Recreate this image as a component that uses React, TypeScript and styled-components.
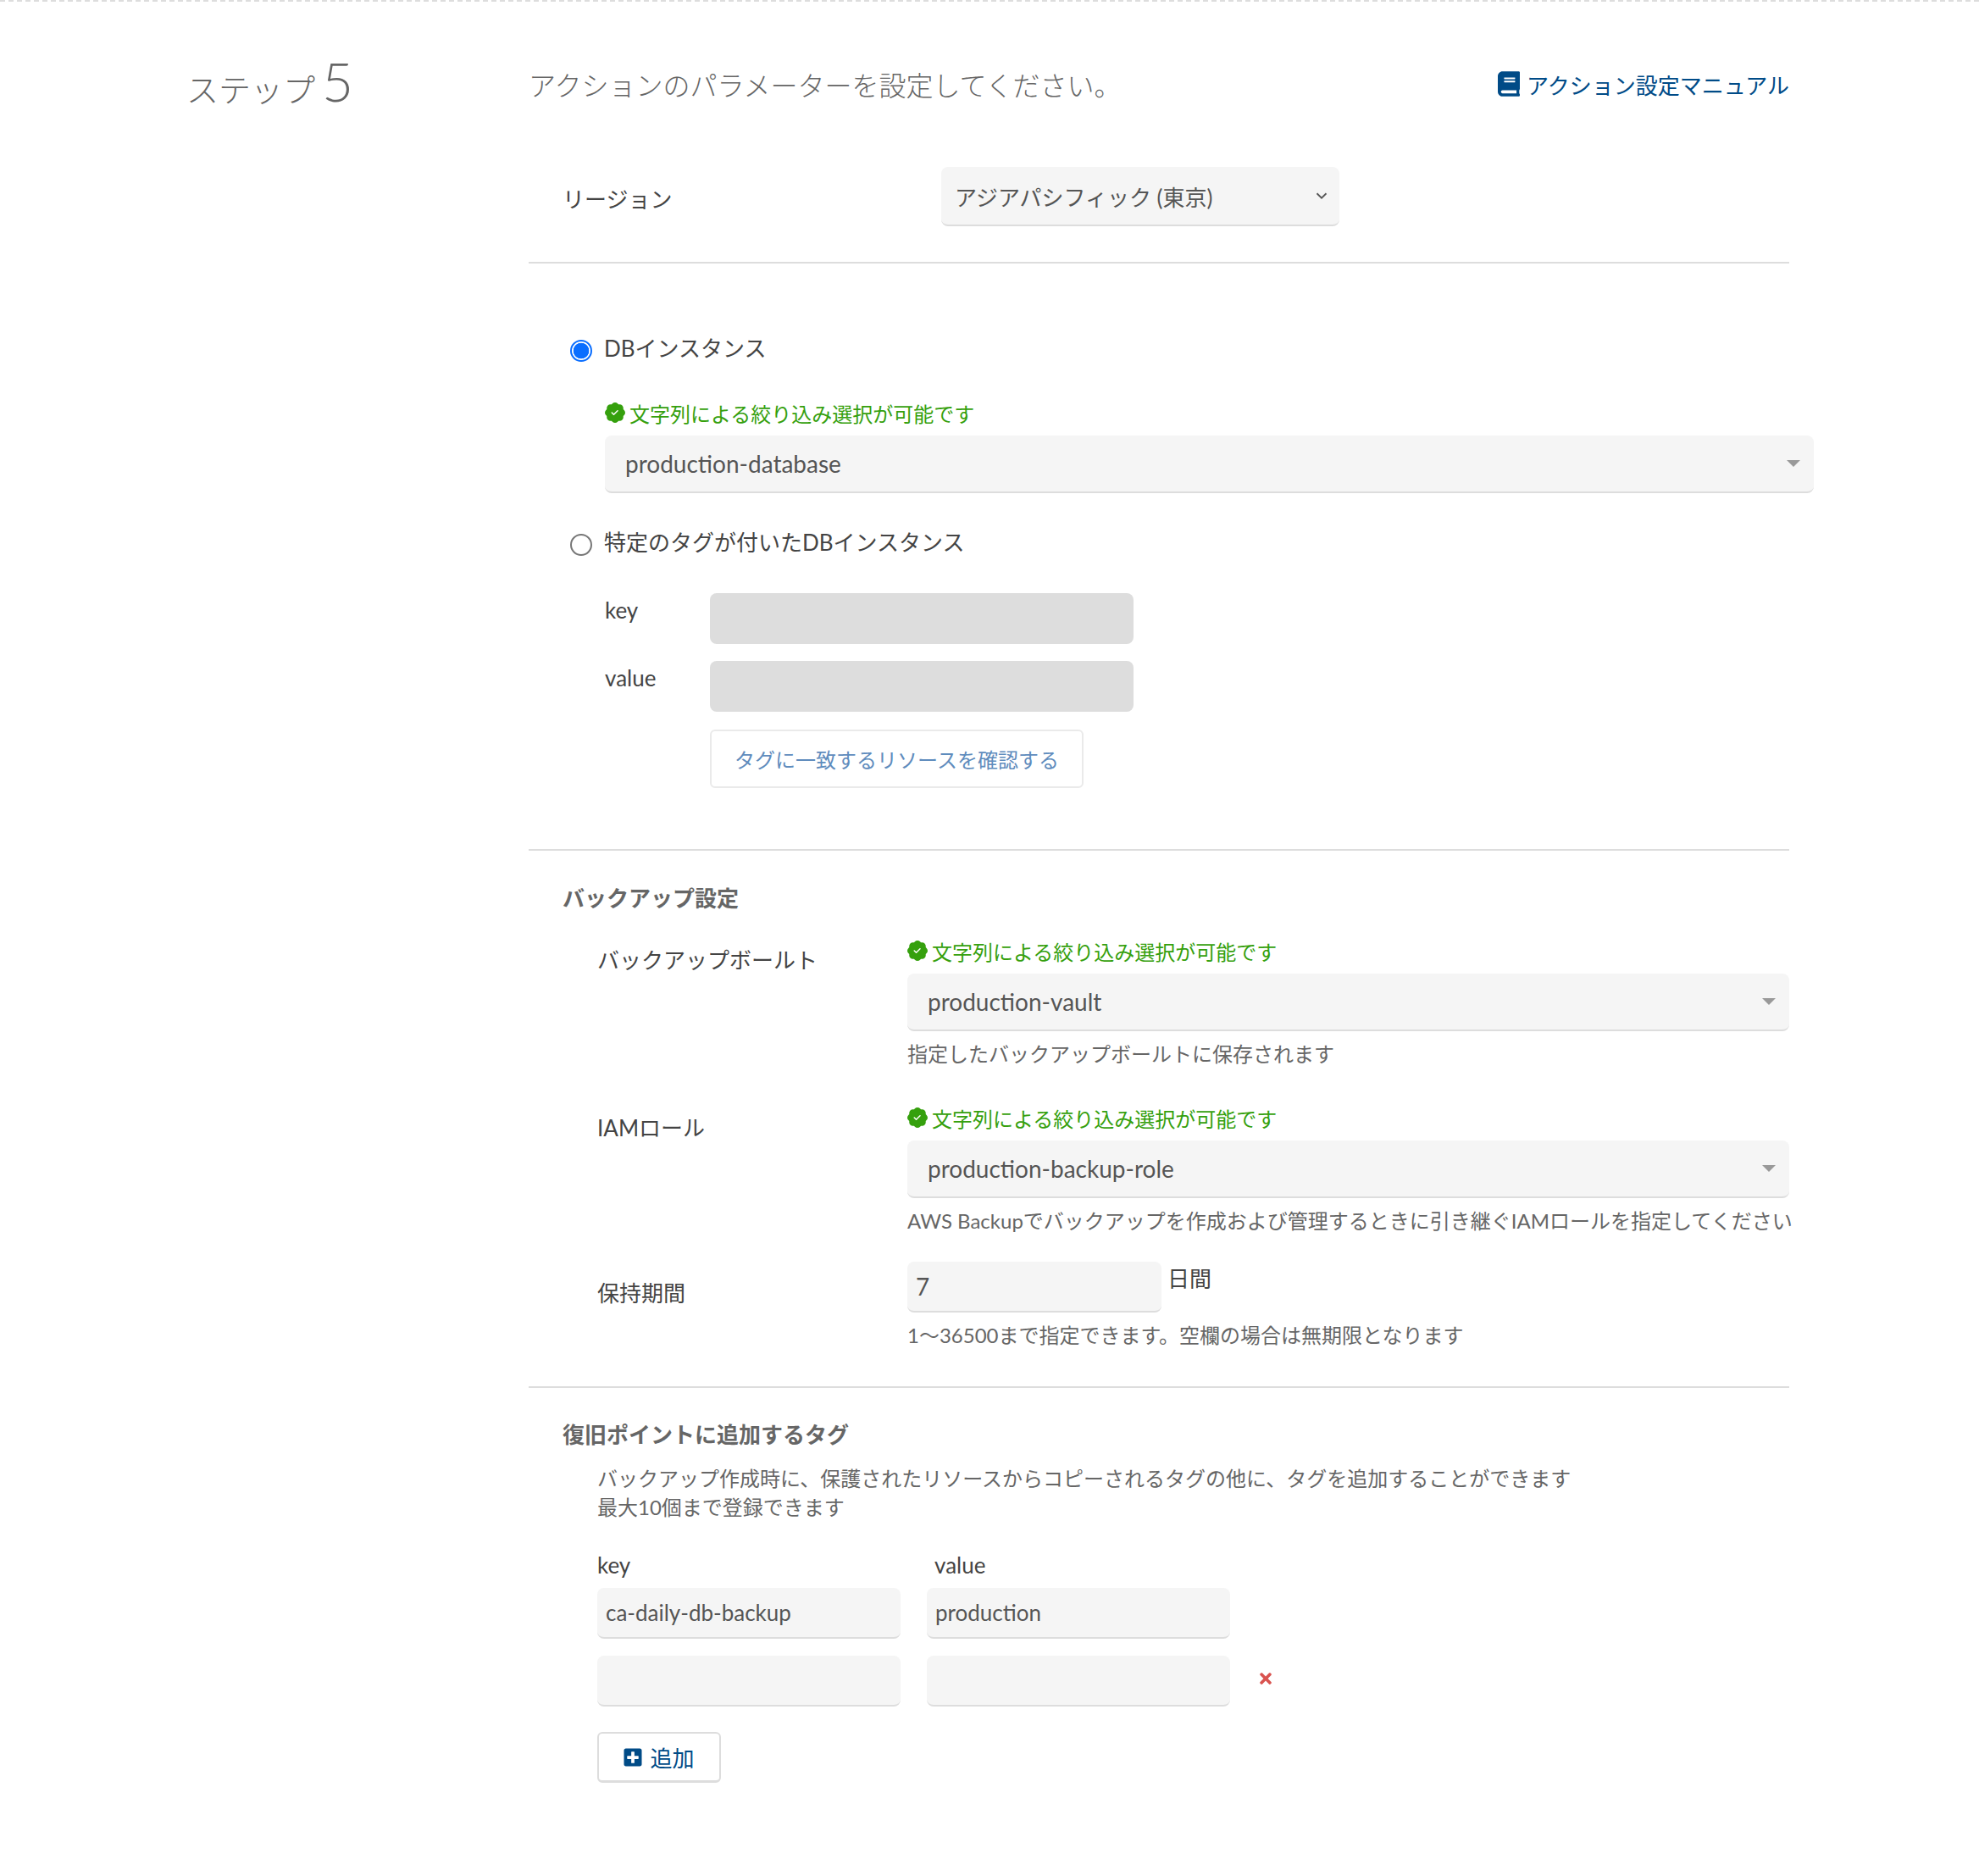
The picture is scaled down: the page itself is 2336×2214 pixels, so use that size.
import React from "react";
import styled, { createGlobalStyle } from "styled-components";
import { FaBook, FaPlusSquare, FaTimes } from "react-icons/fa";
import { BsPatchCheckFill } from "react-icons/bs";

const Global = createGlobalStyle`
  html, body { margin: 0; padding: 0; background: #fff; }
  body { font-family: Lato, "Noto Sans CJK JP", sans-serif; color: #444; }
  * { box-sizing: border-box; }
`;

const Page = styled.div`
  border-top: 2px dashed #ddd;
  display: grid;
  grid-template-columns: 404px 1488px;
  padding: 0 224px 110px 220px;
  height: 2214px;
`;
const StepTitle = styled.h2`
  margin: 64px 0 0;
  font-weight: 300;
  font-size: 38px;
  line-height: 60px;
  color: #666;
  display: flex;
  align-items: baseline;
  height: 60px;
`;
const StepNum = styled.span`
  font-size: 64px;
  margin-left: 8px;
`;
const Main = styled.main`
  display: flex;
  flex-direction: column;
`;
const Header = styled.div`
  margin-top: 66px;
  height: 62px;
  display: flex;
  align-items: center;
  justify-content: space-between;
`;
const Lead = styled.p`
  margin: 0;
  font-size: 32px;
  font-weight: 300;
  color: #666;
`;
const ManualLink = styled.a`
  display: flex;
  align-items: center;
  gap: 8px;
  font-size: 26px;
  color: #004b87;
  svg { width: 26px; height: 32px; }
`;
const Section = styled.section`
  border-bottom: 2px solid #ddd;
  padding: ${(p: { $pad: string }) => p.$pad};
  &:last-child { border-bottom: 0; }
`;
const RegionRow = styled.div`
  display: grid;
  grid-template-columns: 447px 470px;
  align-items: center;
  padding-left: 40px;
  margin-top: 67px;
`;
const PlainLabel = styled.label`
  font-size: 26px;
  line-height: 40px;
  padding-top: 6px;
`;
const fieldBase = `
  background: #f5f5f5;
  border: 0;
  border-bottom: 2px solid #ddd;
  border-radius: 8px;
  font-family: Lato, "Noto Sans CJK JP", sans-serif;
  font-size: 28px;
  color: #555;
  display: flex;
  align-items: center;
  outline: none;
`;
const RegionSelect = styled.div`
  ${fieldBase}
  height: 70px;
  padding: 0 16px;
  font-size: 26px;
  justify-content: space-between;
  svg { width: 22px; height: 22px; margin-right: -6px; }
`;
const RadioRow = styled.label`
  display: flex;
  align-items: center;
  height: 40px;
  margin-top: ${(p: { $top: number }) => p.$top}px;
  margin-left: 49px;
  font-size: 26px;
  line-height: 40px;
  gap: 14px;
`;
const RadioInput = styled.input.attrs({ type: "radio" })`
  appearance: none;
  margin: 6px 0 0;
  width: 26px;
  height: 26px;
  border-radius: 50%;
  border: 2px solid #777;
  background: #fff;
  &:checked {
    border-color: #0a6eff;
    background: radial-gradient(circle, #0a6eff 0 9px, #fff 9.6px);
  }
`;
const Indented = styled.div`
  margin-left: 90px;
`;
const FilterNote = styled.div`
  display: flex;
  align-items: center;
  gap: 5px;
  height: 34px;
  font-size: 24px;
  color: #35a00d;
  svg { width: 24px; height: 24px; flex: none; }
`;
const SearchSelect = styled.div`
  ${fieldBase}
  height: 68px;
  margin-top: 10px;
  padding: 0 16px 0 24px;
  justify-content: space-between;
`;
const DbSelect = styled(SearchSelect)`
  width: 1427px;
`;
const Caret = styled.span`
  width: 0;
  height: 0;
  border-left: 8px solid transparent;
  border-right: 8px solid transparent;
  border-top: 8px solid #999;
`;
const TagGrid = styled.div`
  display: grid;
  grid-template-columns: 124px 500px;
  row-gap: 20px;
  margin-top: 40px;
  font-size: 26px;
`;
const TagLabel = styled.span`
  line-height: 40px;
  padding-top: -2px;
`;
const DisabledInput = styled.div`
  height: 60px;
  background: #ddd;
  border-radius: 8px;
`;
const CheckButton = styled.button`
  grid-column: 2;
  width: 441px;
  height: 69px;
  background: #fff;
  border: 2px solid #eaeaea;
  border-radius: 6px;
  font-family: inherit;
  font-size: 24px;
  color: #5f8cbd;
  margin-top: 1px;
`;
const SectionTitle = styled.h3`
  margin: 0;
  font-size: 26px;
  line-height: 40px;
  font-weight: 700;
  color: #666;
  padding-left: 40px;
`;
const FieldRow = styled.div`
  display: grid;
  grid-template-columns: 366px 1041px;
  padding-left: 81px;
  margin-top: ${(p: { $top: number }) => p.$top}px;
`;
const FieldLabel = styled.div`
  font-size: 26px;
  line-height: 40px;
  padding-top: ${(p: { $top: number }) => p.$top}px;
`;
const Hint = styled.div`
  font-size: 24px;
  line-height: 34px;
  margin-top: 10px;
  color: #666;
  white-space: nowrap;
`;
const Days = styled.div`
  display: flex;
  gap: 7px;
  font-size: 26px;
  line-height: 40px;
`;
const DaysInput = styled.input`
  ${fieldBase}
  width: 300px;
  height: 60px;
  padding: 0 10px;
`;
const Desc = styled.p`
  margin: 15px 0 0 81px;
  font-size: 24px;
  line-height: 34px;
  color: #666;
`;
const KvHead = styled.div`
  display: flex;
  margin: 31px 0 0 81px;
  font-size: 26px;
  line-height: 40px;
`;
const KvKey = styled.span`
  width: 398px;
`;
const KvRow = styled.div`
  display: flex;
  align-items: center;
  gap: 32px;
  margin: ${(p: { $top: number }) => p.$top}px 0 0 81px;
  color: #d9534f;
  svg { width: 20px; height: 20px; margin-top: -6px; }
`;
const KvInput = styled.input`
  ${fieldBase}
  font-size: 26px;
  width: 358px;
  height: 60px;
  padding: 0 10px;
  & + & { margin-left: -1px; }
`;
const AddButton = styled.button`
  display: flex;
  align-items: center;
  justify-content: center;
  gap: 9px;
  width: 146px;
  height: 60px;
  margin: 30px 0 0 81px;
  background: #fff;
  border: 2px solid #ddd;
  border-bottom-width: 3px;
  border-radius: 6px;
  font-family: inherit;
  font-size: 26px;
  color: #004b87;
  svg { width: 22px; height: 24px; }
`;

const Note = () => (
  <FilterNote>
    <BsPatchCheckFill />
    文字列による絞り込み選択が可能です
  </FilterNote>
);

export default function App() {
  return (
    <>
      <Global />
      <Page>
        <StepTitle>
          ステップ<StepNum>5</StepNum>
        </StepTitle>
        <Main>
          <Header>
            <Lead>アクションのパラメーターを設定してください。</Lead>
            <ManualLink>
              <FaBook />
              アクション設定マニュアル
            </ManualLink>
          </Header>
          <Section $pad="0 0 42px">
            <RegionRow>
              <PlainLabel>リージョン</PlainLabel>
              <RegionSelect>
                アジアパシフィック (東京)
                <svg viewBox="0 0 24 24" fill="none" stroke="#555" strokeWidth="2">
                  <path d="M6 9l6 6 6-6" />
                </svg>
              </RegionSelect>
            </RegionRow>
          </Section>
          <Section $pad="0 0 72px">
            <RadioRow $top={80}>
              <RadioInput name="target" defaultChecked />
              DBインスタンス
            </RadioRow>
            <Indented style={{ marginTop: 39 }}>
              <Note />
              <DbSelect>
                production-database
                <Caret />
              </DbSelect>
            </Indented>
            <RadioRow $top={38}>
              <RadioInput name="target" />
              特定のタグが付いたDBインスタンス
            </RadioRow>
            <Indented>
              <TagGrid>
                <TagLabel>key</TagLabel>
                <DisabledInput />
                <TagLabel>value</TagLabel>
                <DisabledInput />
                <CheckButton>タグに一致するリソースを確認する</CheckButton>
              </TagGrid>
            </Indented>
          </Section>
          <Section $pad="36px 0 43px">
            <SectionTitle>バックアップ設定</SectionTitle>
            <FieldRow $top={25}>
              <FieldLabel $top={8}>バックアップボールト</FieldLabel>
              <div>
                <Note />
                <SearchSelect>
                  production-vault
                  <Caret />
                </SearchSelect>
                <Hint>指定したバックアップボールトに保存されます</Hint>
              </div>
            </FieldRow>
            <FieldRow $top={41}>
              <FieldLabel $top={9}>IAMロール</FieldLabel>
              <div>
                <Note />
                <SearchSelect>
                  production-backup-role
                  <Caret />
                </SearchSelect>
                <Hint>AWS Backupでバックアップを作成および管理するときに引き継ぐIAMロールを指定してください</Hint>
              </div>
            </FieldRow>
            <FieldRow $top={31}>
              <FieldLabel $top={17}>保持期間</FieldLabel>
              <div>
                <Days>
                  <DaysInput defaultValue="7" />
                  日間
                </Days>
                <Hint>1〜36500まで指定できます。空欄の場合は無期限となります</Hint>
              </div>
            </FieldRow>
          </Section>
          <Section $pad="35px 0 0">
            <SectionTitle>復旧ポイントに追加するタグ</SectionTitle>
            <Desc>
              バックアップ作成時に、保護されたリソースからコピーされるタグの他に、タグを追加することができます
              <br />
              最大10個まで登録できます
            </Desc>
            <KvHead>
              <KvKey>key</KvKey>
              value
            </KvHead>
            <KvRow $top={7}>
              <KvInput defaultValue="ca-daily-db-backup" />
              <KvInput defaultValue="production" />
            </KvRow>
            <KvRow $top={20}>
              <KvInput />
              <KvInput />
              <FaTimes />
            </KvRow>
            <AddButton>
              <FaPlusSquare />
              追加
            </AddButton>
          </Section>
        </Main>
      </Page>
    </>
  );
}
